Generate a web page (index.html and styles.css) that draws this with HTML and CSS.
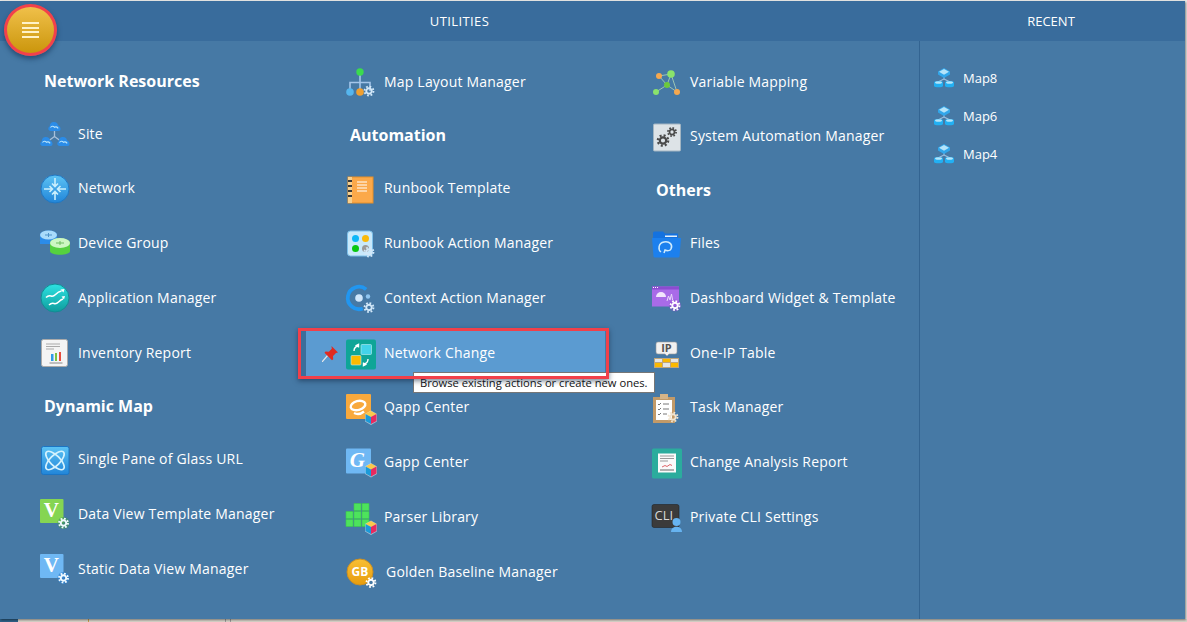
FILE: index.html
```html
<!DOCTYPE html>
<html lang="en">
<head>
<meta charset="utf-8">
<title>Utilities</title>
<link rel="stylesheet" href="styles.css">
</head>
<body>
<svg class="defs" width="0" height="0" aria-hidden="true">
  <defs>
    <symbol id="gear" overflow="visible" viewBox="-7 -7 14 14">
      <circle r="5.2" fill="none" stroke="currentColor" stroke-width="2.2" stroke-dasharray="2.04 2.04"/>
      <circle r="3.2" fill="none" stroke="currentColor" stroke-width="2.2"/>
    </symbol>
    <symbol id="cube" overflow="visible" viewBox="-7 -7 14 14">
      <path d="M0-6.500 6-3v7.500L0 8l-6-3.500V-3z" fill="#fff" opacity=".5"/>
      <path d="M0-6 5.500-3 0 0-5.500-3z" fill="#f9c94c"/>
      <path d="M-5.500-3 0 0v7l-5.500-3z" fill="#1c9ad8"/>
      <path d="M5.500-3 0 0v7l5.500-3z" fill="#e8295f"/>
    </symbol>
    <symbol id="cloud" overflow="visible" viewBox="0 0 13 9">
      <path d="M2.500 9C0 9-.5 5 1.800 4.500 2 1 3.500 0 6 0c2.500 0 3.800 1.500 4 3.500C12.500 3.800 14 9 10.500 9z" fill="#2b8ce8"/>
      <path d="M2.500 5.500c1-1.600 2.800-1.800 4-.2 1-.8 2.500-.6 3.700 1" fill="none" stroke="#b7e3fb" stroke-width="1.100"/>
    </symbol>
    <symbol id="mapicon" viewBox="0 0 20 20">
      <path d="M10 8v3L4 14M10 11l6 3" fill="none" stroke="#9cc1e0" stroke-width="1.100"/>
      <path d="M10 0l6 3.500V6.500L10 10 4 6.500V3.500z" fill="#31a6ea"/>
      <path d="M10 1l5 2.800L10 6.800 5 3.800z" fill="#b4e4fa"/>
      <path d="M0 14.500c0-2 9-2 9 0v3.500c0 1.700-9 1.700-9 0z" fill="#22b0f3"/>
      <path d="M11 14.500c0-2 9-2 9 0v3.500c0 1.700-9 1.700-9 0z" fill="#22b0f3"/>
      <ellipse cx="4.500" cy="14.500" rx="3.500" ry="1.300" fill="#b4e4fa"/>
      <ellipse cx="15.500" cy="14.500" rx="3.500" ry="1.300" fill="#b4e4fa"/>
    </symbol>
    <linearGradient id="tealg" x1="0" y1="0" x2="0" y2="1"><stop offset="0" stop-color="#2de3e3"/><stop offset="1" stop-color="#0e9c9c"/></linearGradient>
    <linearGradient id="goldg" x1="0" y1="0" x2="0" y2="1"><stop offset="0" stop-color="#f8bf35"/><stop offset="1" stop-color="#e79c0c"/></linearGradient>
    <linearGradient id="blueg" x1="0" y1="0" x2="0" y2="1"><stop offset="0" stop-color="#5cc3f5"/><stop offset="1" stop-color="#2185d8"/></linearGradient>
  </defs>
</svg>

<div class="panel">
  <button class="menu-button" aria-label="Menu"><span class="menu-lines"></span></button>
  <header class="bar">
    <div class="bar-title bar-title-main">UTILITIES</div>
    <div class="bar-title">RECENT</div>
  </header>
  <div class="content">
    <main class="utilities">
      <section class="col col-first">
        <h2 class="heading">Network Resources</h2>
        <a class="item item-drop"><svg class="icon" viewBox="0 0 30 30"><path d="M14.500 13v5.500L7 24M14.500 18.500 22 24" fill="none" stroke="#a8c0da" stroke-width="1.300"/><use href="#cloud" x="8" y="4" width="13" height="9"/><use href="#cloud" x="0" y="19" width="13" height="9"/><use href="#cloud" x="17" y="19" width="13" height="9"/></svg><span>Site</span></a>
        <a class="item"><svg class="icon" viewBox="0 0 30 30"><circle cx="15" cy="17" r="14" fill="url(#blueg)" stroke="#1f78c4"/><path d="M15 6v8.500M12 11.500l3 3 3-3M15 28v-8.500M12 22.500l3-3 3 3M4 17h8.500M9.500 14l3 3-3 3M26 17h-8.500M20.500 14l-3 3 3 3" fill="none" stroke="#c9effd" stroke-width="1.600"/></svg><span>Network</span></a>
        <a class="item"><svg class="icon" viewBox="0 0 30 30"><path d="M0 8c0-6 17-6 17 0v9H0z" fill="#2b8ce8"/><ellipse cx="8.500" cy="8" rx="8.500" ry="4.500" fill="#a9dcfb"/><path d="M5 8h7M8.500 6v4" stroke="#4d93c9" stroke-width="1"/><path d="M10 16c0-6 20-6 20 0v8c0 5-20 5-20 0z" fill="#55d13f"/><ellipse cx="20" cy="16" rx="10" ry="5" fill="#cdf7c2"/><path d="M16 16h8M20 14v4" stroke="#6cbc5e" stroke-width="1"/></svg><span>Device Group</span></a>
        <a class="item"><svg class="icon" viewBox="0 0 30 30"><circle cx="15" cy="16" r="14" fill="url(#tealg)" stroke="#138b94"/><path d="M6 15.500c2-2 3.500-2 5-1.500s3 0 4.500-1.500 3.500-3 6-3.500M9 23c2-2 3.500-2 5-1.500s3 0 4.500-1.500 2.500-2.500 4.500-3" fill="none" stroke="#fff" stroke-width="1.500"/><path d="M20.500 7.500l4-.5-1 3.500zM21.500 14.500l3.500-.5-1 3.500z" fill="#fff"/></svg><span>Application Manager</span></a>
        <a class="item"><svg class="icon" viewBox="0 0 30 30"><rect x="1.500" y="2.500" width="26" height="27" rx="2" fill="#f4f4f4" stroke="#aaa"/><path d="M6 7h14M6 9.500h14M6 12h8" stroke="#aaa"/><path d="M11 17h2.500v7H11z" fill="#2f9be8"/><path d="M15 16h2v8h-2z" fill="#7cc242"/><path d="M19 15h2v9h-2z" fill="#e84c3d"/><path d="M9.500 26h13" stroke="#888"/></svg><span>Inventory Report</span></a>
        <h2 class="heading">Dynamic Map</h2>
        <a class="item"><svg class="icon" viewBox="0 0 30 30"><rect x="1.500" y="3.500" width="27.500" height="28" rx="2" fill="url(#blueg)" stroke="#1b75c4"/><g fill="none" stroke="#d5f2fd" stroke-width="1.700"><ellipse cx="15" cy="17.500" rx="12" ry="5" transform="rotate(45 15 17.500)"/><ellipse cx="15" cy="17.500" rx="12" ry="5" transform="rotate(-45 15 17.500)"/></g></svg><span>Single Pane of Glass URL</span></a>
        <a class="item"><svg class="icon" viewBox="0 0 30 30"><rect y="1" width="23.500" height="24" rx="1" fill="#85d552"/><text class="serif-v" x="11.500" y="19">V</text><circle cx="23.500" cy="25" r="6" fill="#3f9b55" opacity=".6"/><use href="#gear" class="gear-light" x="17.500" y="19" width="12" height="12"/></svg><span>Data View Template Manager</span></a>
        <a class="item"><svg class="icon" viewBox="0 0 30 30"><rect y="1" width="23.500" height="24" rx="1" fill="#6fb8f4"/><text class="serif-v" x="11.500" y="19">V</text><circle cx="23.500" cy="25" r="6" fill="#2c80d0" opacity=".7"/><use href="#gear" class="gear-light" x="17.500" y="19" width="12" height="12"/></svg><span>Static Data View Manager</span></a>
      </section>

      <section class="col col-mid">
        <a class="item"><svg class="icon" viewBox="0 0 30 30"><path d="M14 8v16M4 24v-8.500h20V24" fill="none" stroke="#a4c6ea" stroke-width="1.600"/><circle cx="14" cy="5" r="3.700" fill="#3adb4e"/><circle cx="4" cy="25" r="3.800" fill="#56b6ee"/><circle cx="14" cy="25" r="3.800" fill="#f0a030"/><use href="#gear" class="gear-pale" x="17" y="18" width="12" height="12"/></svg><span>Map Layout Manager</span></a>
        <h2 class="heading">Automation</h2>
        <a class="item"><svg class="icon" viewBox="0 0 30 30"><rect x="2" y="4" width="25" height="26" fill="#fba94a" stroke="#e68f28"/><rect x="2" y="4" width="4" height="26" fill="#f7d08e"/><path d="M2 8h4M2 13h4M2 18h4M2 23h4" stroke="#3a3a3a" stroke-width="2"/><path d="M11 9h10M11 12h10M11 15h10M11 18h10" stroke="#fff"/></svg><span>Runbook Template</span></a>
        <a class="item"><svg class="icon" viewBox="0 0 30 30"><rect x="1.500" y="3" width="25" height="25" rx="3" fill="#c9e9fb" stroke="#7cc0ea"/><circle cx="9.500" cy="10.500" r="3.500" fill="#0eb7f7"/><circle cx="19.500" cy="10.500" r="3.500" fill="#f9b90a"/><circle cx="9.500" cy="20.500" r="3.500" fill="#09c710"/><circle cx="19.500" cy="20.500" r="3.500" fill="#9a9a9a"/><use href="#gear" class="gear-pale" x="17" y="18" width="12" height="12"/></svg><span>Runbook Action Manager</span></a>
        <a class="item"><svg class="icon" viewBox="0 0 30 30"><path d="M20.200 6.400A11.200 11.200 0 1 0 16.800 25.500" fill="none" stroke="#2196f0" stroke-width="3.800"/><circle cx="13" cy="15" r="3.800" fill="#cfe6fb"/><circle cx="22" cy="13.500" r="2.200" fill="#8fc5f0"/><use href="#gear" class="gear-pale" x="17" y="18.500" width="12" height="12"/></svg><span>Context Action Manager</span></a>
        <a class="item item-active">
          <svg class="pin" viewBox="0 0 16 16"><path d="M0 16 6 9" stroke="#e8e8e8" stroke-width="1.200"/><path d="M9.500 0 16 6.500l-2 .5-3 3 .2 3.200-1.200 1L2.500 6.700l1-1.200 3.300.2 3-3z" fill="#e02a20"/></svg>
          <svg class="icon" viewBox="0 0 30 30"><rect y="1.500" width="30" height="30" rx="2" fill="#0fa597"/><rect x="15" y="6.500" width="10.500" height="10" rx="1" fill="#43d3ea" stroke="#bfeef5" stroke-width=".6"/><rect x="5" y="17.500" width="10" height="9.500" rx="1" fill="#fbba00" stroke="#bfeef5" stroke-width=".6"/><path d="M12 8c-2.500.5-4 2-4 5M9.500 8l3-1.500v3M18 26c2.500-.5 4-2 4-5M20.500 26l-3 1.500v-3" fill="none" stroke="#fff" stroke-width="1.400"/></svg>
          <span>Network Change</span>
          <div class="tooltip">Browse existing actions or create new ones.</div>
        </a>
        <a class="item item-short"><svg class="icon" viewBox="0 0 30 30"><rect y="2" width="25" height="25" rx="1" fill="#f8a93d"/><ellipse cx="12" cy="13.500" rx="7.500" ry="4.500" transform="rotate(-15 12 13.500)" fill="none" stroke="#fff" stroke-width="2.400"/><path d="M8 21c3 1.500 7 1 10-1.500" fill="none" stroke="#fff" stroke-width="2.400"/><use href="#cube" x="18" y="18" width="14" height="14"/></svg><span>Qapp Center</span></a>
        <a class="item"><svg class="icon" viewBox="0 0 30 30"><rect y="1.500" width="25" height="25" rx="1" fill="#6fb8f4"/><text class="serif-g" x="11.500" y="19.500">G</text><use href="#cube" x="18" y="15.500" width="14" height="14"/></svg><span>Gapp Center</span></a>
        <a class="item"><svg class="icon" viewBox="0 0 30 30"><path class="cells" d="M8 1.500h7v7H8zM16 1.500h7v7h-7zM0 9.500h7v7H0zM8 9.500h7v7H8zM16 9.500h7v7h-7zM0 17.500h7v7H0zM8 17.500h7v7H8zM16 17.500h7v7h-7z"/><use href="#cube" x="18" y="18" width="14" height="14"/></svg><span>Parser Library</span></a>
        <a class="item item-wide"><svg class="icon" viewBox="0 0 30 30"><circle cx="14" cy="15" r="13" fill="url(#goldg)" stroke="#c98f24"/><text class="gb" x="14" y="19">GB</text><use href="#gear" class="gear-white" x="19" y="19.500" width="12" height="12"/></svg><span>Golden Baseline Manager</span></a>
      </section>

      <section class="col col-last">
        <a class="item"><svg class="icon" viewBox="0 0 30 30"><path d="M7 9l8 9M19 7 15 18M7 9 19 7M4 25l11-7 10 7M19 7l6 18" fill="none" stroke="#9cc5b4" stroke-width="1"/><circle cx="7" cy="9" r="3" fill="#f6a84f"/><circle cx="19" cy="7" r="3.800" fill="#8ae36c"/><circle cx="15" cy="18" r="3" fill="#6cc93c"/><circle cx="4" cy="25" r="3" fill="#8ae36c"/><circle cx="25" cy="25" r="3" fill="#f6a84f"/></svg><span>Variable Mapping</span></a>
        <a class="item item-short"><svg class="icon" viewBox="0 0 30 30"><rect x="1.500" y="3" width="27" height="27" rx="1" fill="#dde3e7" stroke="#a3b5c2"/><use href="#gear" class="gear-dark" x="4" y="12.500" width="14" height="14"/><use href="#gear" class="gear-dark" x="14.500" y="5.500" width="11" height="11"/></svg><span>System Automation Manager</span></a>
        <h2 class="heading">Others</h2>
        <a class="item"><svg class="icon" viewBox="0 0 30 30"><path d="M1 5a1.500 1.500 0 0 1 1.500-1.500H11l2 2h13V10H1z" fill="#1472e0"/><path d="M13 7.500h12v1.500H13z" fill="#e7f2fc"/><path d="M0 10h29l-1.500 18.500a1.500 1.500 0 0 1-1.500 1H3a1.500 1.500 0 0 1-1.500-1z" fill="#1c80ee"/><path d="M9 24c-3-2-3-9 3-10 6-1 9 3 7 7-1 2-4 2-6 1l-1 3" fill="none" stroke="#cfeafc" stroke-width="1.500"/></svg><span>Files</span></a>
        <a class="item"><svg class="icon" viewBox="0 0 30 30"><rect y="3.500" width="27" height="20" fill="#a96be8"/><rect y="3.500" width="27" height="3" fill="#8b4cd0"/><path d="M1 4.500h1M3 4.500h1M5 4.500h1" stroke="#fff"/><path d="M4 14a5 5 0 0 1 10 0z" fill="#f2e6fd"/><path d="M15 18l1.500-5 1.500 4 1.500-6 1.500 8" fill="none" stroke="#e9d8fb"/><circle cx="23" cy="22.500" r="6" fill="#8b4cd0" opacity=".5"/><use href="#gear" class="gear-white" x="17" y="16.500" width="12" height="12"/></svg><span>Dashboard Widget &amp; Template</span></a>
        <a class="item"><svg class="icon" viewBox="0 0 30 30"><path d="M6 4h17a2 2 0 0 1 2 2v8a2 2 0 0 1-2 2H17l-2 2-2-2H6a2 2 0 0 1-2-2V6a2 2 0 0 1 2-2z" fill="#f1f1f1" stroke="#999" stroke-width=".6"/><text class="ip" x="14.500" y="14">IP</text><rect x="2" y="20" width="25" height="10" fill="#bfa67c"/><path d="M3 21h7v3H3zM19 21h7v3h-7zM11 25h7v4h-7z" fill="#e5e5e5"/><path d="M11 21h7v3h-7zM3 25h7v4H3zM19 25h7v4h-7z" fill="#fbb900"/></svg><span>One-IP Table</span></a>
        <a class="item item-short"><svg class="icon" viewBox="0 0 30 30"><rect x="1" y="5" width="22" height="26" fill="#c29a68"/><rect x="4" y="8" width="16" height="20" fill="#fff"/><rect x="8" y="2" width="8" height="5" fill="#d6b487"/><path d="M6 12l1 1 2-2M6 17l1 1 2-2M6 22l1 1 2-2M11 12h6M11 17h6M11 22h4" fill="none" stroke="#555" stroke-width=".8"/><use href="#gear" class="gear-tan" x="15" y="19" width="12" height="12"/></svg><span>Task Manager</span></a>
        <a class="item"><svg class="icon" viewBox="0 0 30 30"><rect y="1.500" width="30" height="30" rx="1.500" fill="#2bac9d"/><rect x="6" y="6.500" width="18" height="19" fill="#fafafa"/><path d="M8 9h14M8 11.500h14M8 14h8" stroke="#999"/><path d="M10 20l3-1.500 2 1 3-2 2 1" fill="none" stroke="#e0666a"/><path d="M8 23h14" stroke="#666"/></svg><span>Change Analysis Report</span></a>
        <a class="item"><svg class="icon" viewBox="0 0 30 30"><rect y="2.500" width="27" height="23" rx="2" fill="#3b3b3b" stroke="#222" stroke-width=".6"/><text class="cli" x="2.500" y="18">CLI</text><circle cx="24.500" cy="20" r="4" fill="#66b3f0"/><path d="M19 30c0-7 11-7 11 0z" fill="#66b3f0"/></svg><span>Private CLI Settings</span></a>
      </section>
    </main>
    <aside class="recent">
      <a class="recent-item"><svg class="recent-icon"><use href="#mapicon" width="20" height="20"/></svg><span>Map8</span></a>
      <a class="recent-item"><svg class="recent-icon"><use href="#mapicon" width="20" height="20"/></svg><span>Map6</span></a>
      <a class="recent-item"><svg class="recent-icon"><use href="#mapicon" width="20" height="20"/></svg><span>Map4</span></a>
    </aside>
  </div>
</div>
<div class="tail"></div>
</body>
</html>
```

FILE: styles.css
```css
*, *::before, *::after { box-sizing: border-box; }

html, body { margin: 0; height: 100%; }

body {
  padding-top: 1px;
  background: #e9e9e7;
  font-family: "Open Sans", "Noto Sans", sans-serif;
  color: #fff;
  overflow: hidden;
}

.defs { display: block; height: 0; }

.panel {
  position: relative;
  width: 1185px;
  height: 618px;
  background: #4679a5;
  box-shadow: 1px 1px 2px rgba(0, 0, 0, .45);
}

.bar {
  display: grid;
  grid-template-columns: 919px 1fr;
  height: 40px;
  padding-right: 2px;
  background: #396c9c;
}

.bar-title {
  font-size: 13px;
  line-height: 41px;
  text-align: center;
}

.bar-title-main { letter-spacing: .4px; }

.menu-button {
  position: absolute;
  left: 4px;
  top: 3px;
  width: 53px;
  height: 52px;
  padding: 0;
  border: 3px solid #f2414b;
  border-radius: 50%;
  background: linear-gradient(#f0c04a, #cb960c);
  box-shadow: 0 3px 5px rgba(20, 50, 85, .6);
  z-index: 3;
}

.menu-lines {
  display: block;
  width: 17px;
  height: 16px;
  margin: 0 auto;
  background: repeating-linear-gradient(#fff2c8 0 2px, transparent 2px 4.670px);
}

.content {
  display: grid;
  grid-template-columns: 919px 1fr;
  height: 578px;
}

.utilities {
  display: grid;
  grid-template-columns: repeat(3, 306px);
  padding: 13px 0 0 40px;
}

.col {
  display: flex;
  flex-direction: column;
}

.col-first { padding-top: .500px; }

.heading {
  height: 51px;
  margin: 0;
  padding-left: 4px;
  font-size: 16px;
  font-weight: 700;
  line-height: 53px;
}

.col-mid .heading { line-height: 52px; }
.col-last .heading { height: 52px; line-height: 54px; }

.item {
  display: flex;
  flex: none;
  align-items: center;
  gap: 8px;
  height: 55px;
  font-size: 14px;
  letter-spacing: .2px;
  white-space: nowrap;
}

.item-short { height: 54px; padding-bottom: 1px; }
.item-drop { height: 54px; padding-top: 1px; }
.item-wide { gap: 10px; }

.icon {
  flex: none;
  width: 30px;
  height: 30px;
  overflow: visible;
}

.item-active { position: relative; }

.item-active > .icon,
.item-active > span { position: relative; z-index: 1; }

.item-active::before {
  content: "";
  position: absolute;
  left: -45px;
  top: 6px;
  width: 304px;
  height: 45px;
  background: #5b9bd1;
  border-left: 5px solid #3c6e9b;
}

.item-active::after {
  content: "";
  position: absolute;
  left: -48px;
  top: 3px;
  width: 311px;
  height: 51px;
  border: 3px solid #f1404a;
  box-shadow: 0 2px 5px rgba(15, 35, 60, .55);
  z-index: 3;
  pointer-events: none;
}

.pin {
  position: absolute;
  left: -24px;
  top: 21px;
  width: 16px;
  height: 16px;
  z-index: 1;
}

.tooltip {
  position: absolute;
  left: 67px;
  top: 47px;
  width: 242px;
  height: 21px;
  padding-left: 6px;
  background: #fff;
  border: 1px solid #767676;
  color: #111;
  font-size: 11.200px;
  letter-spacing: 0;
  line-height: 20px;
  z-index: 2;
}

.recent {
  padding-top: 18px;
  padding-left: 14px;
  border-left: 1px solid #336491;
}

.recent-item {
  display: flex;
  align-items: center;
  gap: 9px;
  height: 38px;
  font-size: 13px;
}

.recent-icon { width: 20px; height: 20px; flex: none; }

.tail {
  height: 3px;
  background: linear-gradient(90deg, #2d5f86 0 18px, #d6d2c8 18px 88px, #c79a4a 88px 89px, #d6d2c8 89px 225px, #999 225px 226px, #d6d2c8 226px 230px, #999 230px 231px, #d6d2c8 231px);
}

.gear-light { color: #f2fbff; }
.gear-pale { color: #d2e8f9; }
.gear-white { color: #fff; }
.gear-dark { color: #4a4a4a; }
.gear-tan { color: #f1e4cf; }

.cells { fill: #4de35c; stroke: #3ac94a; stroke-width: .6; }

.serif-v, .serif-g {
  font-family: "Liberation Serif", serif;
  font-weight: 700;
  fill: #fff;
  text-anchor: middle;
}

.serif-v { font-size: 21px; }
.serif-g { font-size: 21px; font-style: italic; }

.gb {
  font-size: 12px;
  font-weight: 700;
  letter-spacing: 0;
  fill: #fff;
  text-anchor: middle;
}

.ip {
  font-size: 11px;
  font-weight: 700;
  letter-spacing: 0;
  fill: #555;
  text-anchor: middle;
}

.cli {
  font-size: 13px;
  letter-spacing: 0;
  fill: #d8d8d8;
}
```
